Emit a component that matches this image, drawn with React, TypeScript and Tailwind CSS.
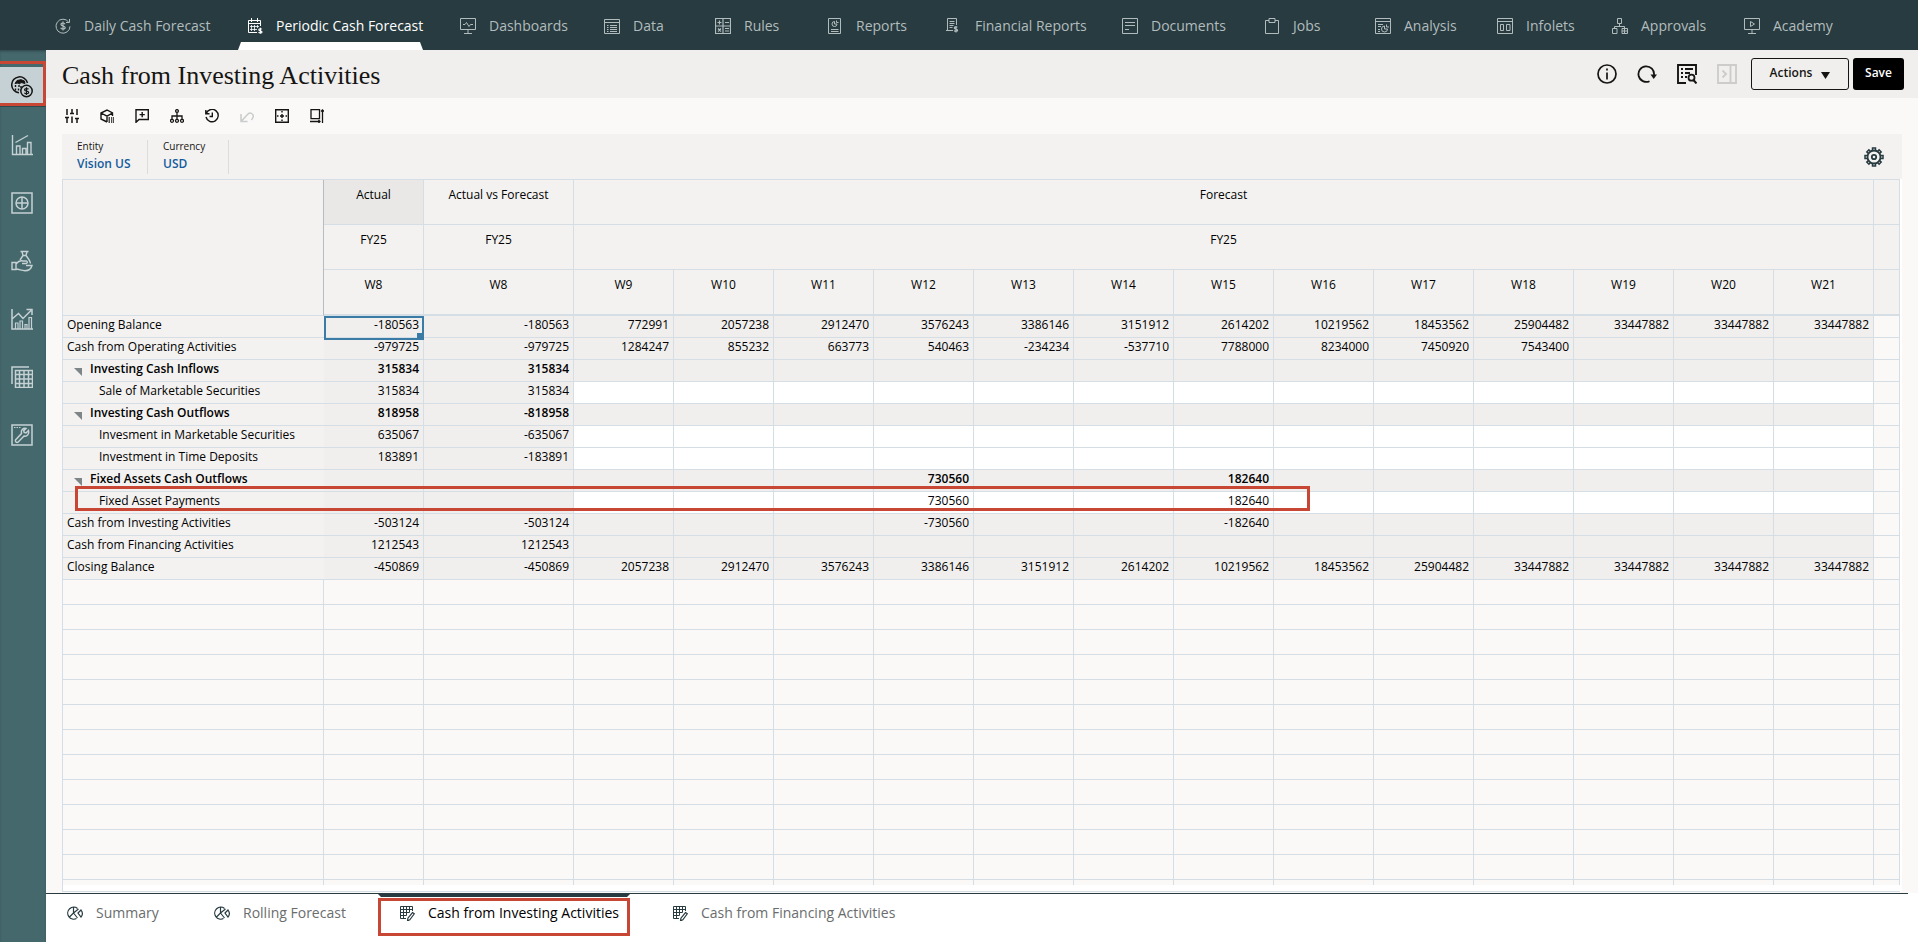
import type { ReactNode } from "react";

interface IconProps {
  children: ReactNode;
  box?: number;
  className?: string;
}

function Icon({ children, box = 16, className = "size-4" }: IconProps) {
  return (
    <svg
      viewBox={`0 0 ${box} ${box}`}
      className={`shrink-0 ${className}`}
      fill="none"
      stroke="currentColor"
      strokeWidth="1"
      aria-hidden="true"
    >
      {children}
    </svg>
  );
}

const dollar = "M10 6.2c-.3-.8-1-1.2-2-1.2-1.2 0-2 .5-2 1.4 0 2 4.2 1.2 4.2 3.2 0 .9-.9 1.4-2.2 1.4-1.2 0-2-.4-2.3-1.3M8 3.5v9";

const navItems: { label: string; icon: ReactNode; active?: boolean }[] = [
  {
    label: "Daily Cash Forecast",
    icon: (
      <Icon>
        <path d="M13.6 4A7 7 0 1 0 15 8.3M14.5 1v3.5H11" />
        <path d={dollar} strokeWidth="1.2" />
      </Icon>
    ),
  },
  {
    label: "Periodic Cash Forecast",
    active: true,
    icon: (
      <Icon>
        <path d="M10 14.5H1.5v-12h12V8M4.5 0v4M10.500 0v4M1.500 5.500h12" />
        <path d="M3 8.500h9M3 11.500h7M4.500 7v6M7.500 7v6M10.500 7v3" strokeWidth=".8" />
        <path d="M14.800 11.300c-.4-.8-3-.8-3 .5 0 1.300 3.200.7 3.200 2.100 0 1.300-2.700 1.300-3.400.2M13.400 9.800v6" strokeWidth="1.200" />
      </Icon>
    ),
  },
  {
    label: "Dashboards",
    icon: (
      <Icon>
        <path d="M.5.500h15v11H.5zM8 11.500v4M4 15.500h8M3 6.500h2l1.500-2 2.500 4 1.500-2H13" />
      </Icon>
    ),
  },
  {
    label: "Data",
    icon: (
      <Icon>
        <path d="M.5 1.500h15v14H.5zM.5 4.500h15M3 7.500h1.500M6 7.500h7M3 9.500h1.500M6 9.500h7M3 11.500h1.500M6 11.500h7M3 13.500h1.500M6 13.500h7" />
      </Icon>
    ),
  },
  {
    label: "Rules",
    icon: (
      <Icon>
        <path d="M.5.500h15v15H.5zM8 .5v15M.5 8h15" strokeWidth="1.200" />
        <path d="M2.500 4.500h4M4.500 2.500v4M10 4.500h4M3 10.500l3 3M6 10.500l-3 3M10 10.500h4M10 13h4" strokeWidth="1.200" />
      </Icon>
    ),
  },
  {
    label: "Reports",
    icon: (
      <Icon>
        <path d="M1.500.500h12v15h-12zM4 11.500h7.500M4 13.500h7.500M7.500 3.500A2.500 2.500 0 1 0 10 6H7.500zM9.500 2.500v2h2" />
      </Icon>
    ),
  },
  {
    label: "Financial Reports",
    icon: (
      <Icon>
        <path d="M10.500 7V.500h-9v12H7M3.500 3.500h5M3.500 5.500h5M3.500 7.500h4M3.500 9.500h3M0 12.500h6" />
        <path d="M11.300 9.300c-.5-.7-3-.8-3 .6 0 1.500 3.300.8 3.300 2.400 0 1.400-2.900 1.300-3.400.2M10 8v6.500" strokeWidth="1.200" />
      </Icon>
    ),
  },
  {
    label: "Documents",
    icon: (
      <Icon>
        <path d="M.5.500h15v15H.5zM3 4.500h10M3 7.500h10M3 11.500h4" />
      </Icon>
    ),
  },
  {
    label: "Jobs",
    icon: (
      <Icon>
        <path d="M5 2.500H1.500v13h13v-13H11M5 .5h6v4H5z" />
      </Icon>
    ),
  },
  {
    label: "Analysis",
    icon: (
      <Icon>
        <path d="M.5.500h15v15H.5zM.5 3.500h15M3 6.500h5M3 8.500h3M3 11.500h2M3 13.500h2M9.500 8A3 3 0 1 0 12.500 11h-3zM11.500 6.500v2.500h2.500" />
      </Icon>
    ),
  },
  {
    label: "Infolets",
    icon: (
      <Icon>
        <path d="M.5.500h15v15H.5zM.5 3.500h15M3.500 6.500h3v6h-3zM9.500 6.500h3.500v6H9.500z" />
      </Icon>
    ),
  },
  {
    label: "Approvals",
    icon: (
      <Icon>
        <path d="M5.500.500h4v5h-4zM7.500 5.500v3M2.500 11V8.500h10V11M.5 10.500h4.500v5H.5zM10 10.500h5.500v5H10zM12.500 11v4.500M10 13h5.500" />
      </Icon>
    ),
  },
  {
    label: "Academy",
    icon: (
      <Icon>
        <path d="M.5.500h15v11H.5zM8 11.500v4M4 15.500h8M6.500 3.500v5l4-2.500z" />
      </Icon>
    ),
  },
];

const sideItems: { label: string; icon: ReactNode; active?: boolean }[] = [
  {
    label: "Cash forecasting",
    active: true,
    icon: (
      <Icon box={22} className="size-[22px]">
        <path d="M8 16.800A8 8 0 1 1 16.500 7" strokeWidth="1.500" />
        <path d="M4 7.500l2-3 4-.8 3.500 1.300.5 2.500-4-1-1.500 1.500-1.500-1z" fill="currentColor" />
        <path d="M4.500 9v2M8 9v2M4.500 12.500v2M7.500 12.500v2M10 10v2" strokeWidth="1.400" />
        <circle cx="15.500" cy="15" r="5.700" strokeWidth="1.500" />
        <path d="M17.500 13.300c-.5-1-4-1.200-4 .5 0 1.800 4.200.9 4.200 2.700 0 1.700-3.700 1.600-4.300.3M15.500 11.200v7.800" strokeWidth="1.200" />
      </Icon>
    ),
  },
  {
    label: "Overview",
    icon: (
      <Icon box={22} className="size-[22px]">
        <path d="M1.500 1v19.500H22M5.500 20v-8H9v8M11.500 20v-5.500H15V20M16.500 20V8.500H20V20M4.500 8.500L17 1.500" strokeWidth="1.400" />
      </Icon>
    ),
  },
  {
    label: "Currencies",
    icon: (
      <Icon box={22} className="size-[22px]">
        <path d="M1 1h20v20H1zM11 5v12M5 11h12" strokeWidth="1.500" />
        <circle cx="11" cy="11" r="6" strokeWidth="1.500" />
      </Icon>
    ),
  },
  {
    label: "Funding",
    icon: (
      <Icon box={22} className="size-[22px]">
        <path d="M9.500 1.500h8M11 1.500l1 4-3 4.500M16 1.500l-1 4c2 2.500 4 5 4.500 8M12 5.500h3" strokeWidth="1.400" />
        <path d="M1 12.500h4v7H1zM5 14c2-2.500 5-3.500 7-3h3.500c1.500.8 1 2.200-.5 2.500h-4M15 15.500h6c-.8 3.500-3.500 5.200-7 5.200-3.500 0-5-1.200-9-1.700" strokeWidth="1.400" />
      </Icon>
    ),
  },
  {
    label: "Trends",
    icon: (
      <Icon box={22} className="size-[22px]">
        <path d="M1 1v20h21M1 11l6.500-5.500 4.500 5 8-8M15.500 1.500H21V7" strokeWidth="1.500" />
        <path d="M4.500 21v-6H7v6M9 21v-8h2.500v8M14 21v-4.500h2V21M18 21V9.500h2.500V21" strokeWidth="1.200" />
      </Icon>
    ),
  },
  {
    label: "Data grid",
    icon: (
      <Icon box={22} className="size-[22px]">
        <path d="M1 18V1h17" strokeWidth="1.500" />
        <path d="M4.500 4.500h17v17h-17zM4.500 8.500h17M4.500 13h17M4.500 17.500h17M8.500 4.500v17M13 4.500v17M17.500 4.500v17" strokeWidth="1.500" />
      </Icon>
    ),
  },
  {
    label: "Configure",
    icon: (
      <Icon box={22} className="size-[22px]">
        <path d="M1 1h20v20H1z" strokeWidth="1.500" />
        <path d="M3 3.500h1.500M5.500 3.500H7M8 3.500h1.500" />
        <path d="M17.500 6.500l-2.500 2.500-1.800-.6-.5-1.700L15 4.500c-3-.7-5.500 2-4.500 5l-6 6.500c-.6 1.500 1 3 2.500 2.200l6-6.200c3 .8 5.500-2 4.500-5.500z" strokeWidth="1.500" />
      </Icon>
    ),
  },
];

const tools: { label: string; icon: ReactNode; disabled?: boolean }[] = [
  {
    label: "Adjust",
    icon: (
      <Icon box={14} className="size-[14px]">
        <path d="M2 0v6M2 8.500V14M7 0v3M7 7.500V14M12 0v6M12 9.500V14M0 8.500h4M5 4.500h4M10 9.500h4M7 3v1.500" strokeWidth="1.500" />
      </Icon>
    ),
  },
  {
    label: "Cube view",
    icon: (
      <Icon box={14} className="size-[14px]">
        <path d="M7 13L1 10V4l6-3 5.500 3v3M1 4l6 3.200L12.500 4M7 7v6" strokeWidth="1.400" />
        <path d="M8.500 9h1.500M11 9h1.300M13 9h1M8.500 11h1.500M11 11h1.300M13 11h1M8.500 13h1.500M11 13h1.300M13 13h1" strokeWidth="1.300" />
      </Icon>
    ),
  },
  {
    label: "Comments",
    icon: (
      <Icon box={14} className="size-[14px]">
        <path d="M1 13.300V.8h12.300v9.700H4zM7.200 3v5.200M4.600 5.600h5.200" strokeWidth="1.400" />
      </Icon>
    ),
  },
  {
    label: "Supporting detail",
    icon: (
      <Icon box={14} className="size-[14px]">
        <circle cx="7" cy="2" r="1.400" strokeWidth="1.300" />
        <path d="M7 3.500V10M2 10V7h10v3" strokeWidth="1.300" />
        <circle cx="2" cy="11.800" r="1.500" strokeWidth="1.300" />
        <circle cx="7" cy="11.800" r="1.500" strokeWidth="1.300" />
        <circle cx="12" cy="11.800" r="1.500" strokeWidth="1.300" />
      </Icon>
    ),
  },
  {
    label: "Change history",
    icon: (
      <Icon box={14} className="size-[14px]">
        <path d="M1.300 4.200A6.200 6.200 0 1 1 1 8M.8 1v3.700h3.700M7.300 3.500v4H4.500" strokeWidth="1.400" />
      </Icon>
    ),
  },
  {
    label: "Undo",
    disabled: true,
    icon: (
      <Icon box={14} className="size-[14px]">
        <path d="M1 5v7.500h6.500M1.500 12L8 5c2-2 5.300-.5 5.300 2.200 0 1.800-1 2.800-2 3.800" strokeWidth="1.500" />
      </Icon>
    ),
  },
  {
    label: "Grid lines",
    icon: (
      <Icon box={14} className="size-[14px]">
        <path d="M.7.700h12.600v12.600H.7z" strokeWidth="1.400" />
        <path d="M7 2v1.500M7 5v4M7 10.500V12M2 7h1.500M5 7h4M10.500 7H12" strokeWidth="1.400" />
      </Icon>
    ),
  },
  {
    label: "Resize",
    icon: (
      <Icon box={14} className="size-[14px]">
        <path d="M1 .700h8.500v9H1zM0 12.500h10M8.500 11l1.500 1.500L8.500 14M12.500 14V1M11 2.500L12.500 1 14 2.500" strokeWidth="1.300" />
      </Icon>
    ),
  },
];

const weeks = ["W9", "W10", "W11", "W12", "W13", "W14", "W15", "W16", "W17", "W18", "W19", "W20", "W21"];
const noValues = weeks.map(() => "");

interface GridRow {
  label: string;
  kind: "total" | "group" | "input";
  actual: string;
  variance: string;
  forecast: string[];
  flagged?: boolean;
}

const rows: GridRow[] = [
  {
    label: "Opening Balance",
    kind: "total",
    actual: "-180563",
    variance: "-180563",
    forecast: ["772991", "2057238", "2912470", "3576243", "3386146", "3151912", "2614202", "10219562", "18453562", "25904482", "33447882", "33447882", "33447882"],
  },
  {
    label: "Cash from Operating Activities",
    kind: "total",
    actual: "-979725",
    variance: "-979725",
    forecast: ["1284247", "855232", "663773", "540463", "-234234", "-537710", "7788000", "8234000", "7450920", "7543400", "", "", ""],
  },
  { label: "Investing Cash Inflows", kind: "group", actual: "315834", variance: "315834", forecast: noValues },
  { label: "Sale of Marketable Securities", kind: "input", actual: "315834", variance: "315834", forecast: noValues },
  { label: "Investing Cash Outflows", kind: "group", actual: "818958", variance: "-818958", forecast: noValues },
  { label: "Invesment in Marketable Securities", kind: "input", actual: "635067", variance: "-635067", forecast: noValues },
  { label: "Investment in Time Deposits", kind: "input", actual: "183891", variance: "-183891", forecast: noValues },
  {
    label: "Fixed Assets Cash Outflows",
    kind: "group",
    actual: "",
    variance: "",
    forecast: ["", "", "", "730560", "", "", "182640", "", "", "", "", "", ""],
  },
  {
    label: "Fixed Asset Payments",
    kind: "input",
    actual: "",
    variance: "",
    forecast: ["", "", "", "730560", "", "", "182640", "", "", "", "", "", ""],
    flagged: true,
  },
  {
    label: "Cash from Investing Activities",
    kind: "total",
    actual: "-503124",
    variance: "-503124",
    forecast: ["", "", "", "-730560", "", "", "-182640", "", "", "", "", "", ""],
  },
  { label: "Cash from Financing Activities", kind: "total", actual: "1212543", variance: "1212543", forecast: noValues },
  {
    label: "Closing Balance",
    kind: "total",
    actual: "-450869",
    variance: "-450869",
    forecast: ["2057238", "2912470", "3576243", "3386146", "3151912", "2614202", "10219562", "18453562", "25904482", "33447882", "33447882", "33447882", "33447882"],
  },
];

const emptyRows = Array.from({ length: 13 }, (_, i) => i);

const pieIcon = (
  <Icon>
    <path d="M9.500 13.500A6 6 0 1 1 10.500 3.500M6.500 2.500v5.500L2.500 12M6.500 8l4 5M6.500 8l5-4" strokeWidth="1.200" />
    <path d="M11 8l3-3c1.800 2.500 1.800 5 0 7z" strokeWidth="1.200" />
  </Icon>
);

const formIcon = (
  <Icon>
    <path d="M7 13.500H1.500v-12h12V6M1.500 4.500h12M1.500 7.500h9M1.500 10.500h6M4.500 1.500v12M7.500 1.500v9M10.500 1.500v6" />
    <path d="M13.500 7.500l1.800 1.300-4.500 6-2.300 1 .4-2.600z" strokeWidth="1.200" fill="#fff" />
  </Icon>
);

const formTabs = [
  { label: "Summary", icon: pieIcon },
  { label: "Rolling Forecast", icon: pieIcon },
  { label: "Cash from Investing Activities", icon: formIcon, active: true },
  { label: "Cash from Financing Activities", icon: formIcon },
];

const headCell =
  "h-[45px] border-r border-b border-[#d5dee5] bg-[#f3f2f0] px-1 pt-[7px] text-center align-top font-normal leading-4";

function TopNav() {
  return (
    <nav className="h-[50px] shrink-0 bg-[#273b40] pl-[35px]">
      <ul className="grid h-full grid-cols-[192px_213px_144px_111px_112px_119px_176px_142px_111px_122px_115px_132px_auto]">
        {navItems.map((item) => (
          <li key={item.label} className="relative">
            <a
              href="#"
              className={`flex h-full items-center gap-[13px] pt-px pl-5 text-sm whitespace-nowrap ${item.active ? "text-white" : "text-[#b3bcbd]"}`}
            >
              {item.icon}
              {item.label}
            </a>
            {item.active && (
              <span className="absolute right-[17px] bottom-0 left-[11px] h-2 bg-white [clip-path:polygon(3px_0,calc(100%-3px)_0,100%_100%,0_100%)]" />
            )}
          </li>
        ))}
      </ul>
    </nav>
  );
}

function SideBar() {
  return (
    <aside className="w-[46px] shrink-0 bg-[#45686d] pt-2 shadow-[inset_0_2px_3px_-1px_rgb(0_0_0/0.35)]">
      {sideItems.map((item) => (
        <button
          key={item.label}
          type="button"
          title={item.label}
          className={`relative flex h-[58px] w-full items-center ${item.active ? "text-[#161513]" : "text-[#c5d1d3]"}`}
        >
          <span className={`flex h-10 w-full items-center pl-[11px] ${item.active ? "border-b border-[#2f4a4f] bg-[#c5d1d4]" : ""}`}>
            {item.icon}
          </span>
          {item.active && (
            <span className="absolute top-[3px] right-0 bottom-[10px] left-0 border-y-3 border-r-3 border-[#c74634]" />
          )}
        </button>
      ))}
    </aside>
  );
}

function TitleBar() {
  return (
    <header className="flex h-12 shrink-0 items-center justify-between bg-[#f0efed] pr-[14px] pl-4">
      <h1 className="pt-[3px] font-['Liberation_Serif',serif] text-[26px] leading-8">Cash from Investing Activities</h1>
      <div className="flex items-center">
        <div className="mr-[14px] flex items-center gap-5">
          <button type="button" title="Information">
            <Icon box={20} className="size-5">
              <circle cx="10" cy="10" r="9" strokeWidth="1.700" />
              <path d="M10 8.500v7M10 4.500v2" strokeWidth="1.700" />
            </Icon>
          </button>
          <button type="button" title="Refresh">
            <Icon box={20} className="size-5">
              <path d="M12.500 17.200A7.800 7.800 0 1 1 17 11" strokeWidth="1.800" />
              <path d="M13.500 10.500H20L16.700 15z" fill="currentColor" stroke="none" />
            </Icon>
          </button>
          <button type="button" title="Find in form">
            <Icon box={20} className="size-5">
              <path d="M9 19H1V1h18v10M8 5h8M8 9h5M8 13h2M4 5h2M4 9h2M4 13h2" strokeWidth="1.900" />
              <circle cx="14.500" cy="13.700" r="3" strokeWidth="1.800" />
              <path d="M16.500 16l3 3.500" strokeWidth="2" />
            </Icon>
          </button>
          <button type="button" title="Expand panel" disabled className="text-[#cccccb]">
            <Icon box={20} className="size-5">
              <path d="M1 1h18v18H1zM13.500 1v18M5.500 6.500L9 10l-3.500 3.500" strokeWidth="1.900" />
            </Icon>
          </button>
        </div>
        <button
          type="button"
          className="mr-1 flex h-8 w-[98px] items-center justify-center gap-[9px] rounded-[3px] border border-[#161513] pb-0.5 text-xs font-semibold"
        >
          Actions
          <svg viewBox="0 0 9 7" className="mt-1 h-[7px] w-[9px]" aria-hidden="true">
            <path d="M0 0h9L4.500 7z" fill="currentColor" />
          </svg>
        </button>
        <button type="button" className="h-8 w-[51px] rounded-[3px] bg-black pb-0.5 text-xs font-semibold text-white">
          Save
        </button>
      </div>
    </header>
  );
}

function PointOfView() {
  return (
    <div className="mr-4 ml-4 flex h-[45px] shrink-0 items-center justify-between bg-[#f3f2f0]">
      <dl className="flex h-[34px]">
        <div className="w-[86px] border-r border-[#dcdcda] pl-[15px]">
          <dt className="text-[10px] leading-3">Entity</dt>
          <dd className="mt-1 text-xs leading-4 font-semibold whitespace-nowrap text-[#145c9e]">
            <a href="#">Vision US</a>
          </dd>
        </div>
        <div className="w-[81px] border-r border-[#dcdcda] pl-[15px]">
          <dt className="text-[10px] leading-3">Currency</dt>
          <dd className="mt-1 text-xs leading-4 font-semibold text-[#145c9e]">
            <a href="#">USD</a>
          </dd>
        </div>
      </dl>
      <button type="button" title="Settings" className="mr-[18px] text-[#273b40]">
        <Icon box={20} className="size-5">
          <circle cx="10" cy="10" r="6.500" strokeWidth="1.800" />
          <circle cx="10" cy="10" r="2.200" strokeWidth="1.800" />
          <path
            d="M8.500 4V1h3v3M8.500 16v3h3v-3M4 8.500H1v3h3M16 8.500h3v3h-3M4.700 6.800L2.800 4.900l2.100-2.100 1.900 1.900M13.200 4.700l1.900-1.900 2.100 2.100-1.900 1.900M15.300 13.200l1.900 1.900-2.100 2.100-1.900-1.900M6.800 15.300l-1.900 1.900-2.100-2.100 1.900-1.900"
            strokeWidth="1.500"
          />
        </Icon>
      </button>
    </div>
  );
}

function RowLabel({ row }: { row: GridRow }) {
  if (row.kind === "group") {
    return (
      <span className="flex items-start pl-[7px] font-semibold">
        <svg viewBox="0 0 8 8" className="mt-2 mr-2 size-2" aria-hidden="true">
          <path d="M0 0h8v8z" fill="#7d8587" />
        </svg>
        {row.label}
      </span>
    );
  }
  return <span className={row.kind === "input" ? "pl-8" : ""}>{row.label}</span>;
}

function ForecastGrid() {
  return (
    <div className="mr-4 ml-4 mb-px flex min-h-0 flex-1 flex-col bg-white pr-0.5">
      <div className="min-h-0 flex-1 border-b border-l border-[#d5dee5] pb-[6px]">
        <div className="h-full overflow-hidden border-t border-[#d5dee5]">
          <table className="w-full table-fixed border-separate border-spacing-0 text-xs text-black">
            <colgroup>
              <col className="w-[261px]" />
              <col className="w-[100px]" />
              <col className="w-[150px]" />
              {weeks.map((week) => (
                <col key={week} className="w-[100px]" />
              ))}
              <col />
            </colgroup>
            <thead>
              <tr>
                <td rowSpan={3} className="border-r border-b border-r-[#b5bdc1] border-b-[#d5dee5] bg-[#f3f2f0]" />
                <th className={`${headCell} bg-[#e9e8e6]!`}>Actual</th>
                <th className={headCell}>Actual vs Forecast</th>
                <th colSpan={13} className={headCell}>Forecast</th>
                <td className={headCell} />
              </tr>
              <tr>
                <th className={headCell}>FY25</th>
                <th className={headCell}>FY25</th>
                <th colSpan={13} className={headCell}>FY25</th>
                <td className={headCell} />
              </tr>
              <tr>
                {["W8", "W8", ...weeks].map((week, i) => (
                  <th key={i} className={`${headCell} h-[46px]! border-b-2`}>{week}</th>
                ))}
                <td className={`${headCell} h-[46px]! border-b-2`} />
              </tr>
            </thead>
            <tbody>
              {rows.map((row, r) => {
                const bold = row.kind === "group" ? "font-semibold" : "";
                const cell = `h-[22px] border-r border-b border-[#d5dee5] p-0 pr-1 text-right align-top leading-[17px] ${bold}`;
                return (
                  <tr key={row.label}>
                    <th
                      scope="row"
                      className="relative h-[22px] border-b border-[#d5dee5] bg-[#f3f2f0] p-0 pl-1 text-left align-top leading-[17px] font-normal whitespace-nowrap"
                    >
                      <RowLabel row={row} />
                      {row.flagged && (
                        <span className="pointer-events-none absolute -top-[6px] left-3 z-10 h-[25px] w-[1235px] border-3 border-[#c74634]" />
                      )}
                    </th>
                    <td className={`${cell} relative bg-[#f0efed]`}>
                      {row.actual}
                      {r === 0 && (
                        <span className="absolute top-0 -right-px -bottom-[3px] left-0 z-10 border-2 border-[#3a7ca5]">
                          <span className="absolute right-0 bottom-0 size-[5px] bg-[#3a7ca5]" />
                        </span>
                      )}
                    </td>
                    <td className={`${cell} bg-[#f0efed]`}>{row.variance}</td>
                    {row.forecast.map((value, i) => (
                      <td key={i} className={`${cell} ${row.kind === "input" ? "bg-white" : "bg-[#f0efed]"}`}>
                        {value}
                      </td>
                    ))}
                    <td className="border-r border-b border-[#d5dee5] bg-[#faf9f7]" />
                  </tr>
                );
              })}
              {emptyRows.map((n) => (
                <tr key={n}>
                  {Array.from({ length: 17 }, (_, i) => (
                    <td key={i} className="h-[25px] border-r border-b border-[#d5dee5] bg-[#faf9f7] p-0" />
                  ))}
                </tr>
              ))}
            </tbody>
          </table>
        </div>
      </div>
    </div>
  );
}

function FormTabs() {
  return (
    <footer className="h-[49px] shrink-0 bg-white">
      <div className="mr-[10px] h-full border-t border-[#273b40]">
        <ul className="grid h-full grid-cols-[147px_185px_273px_auto] pl-[21px]">
          {formTabs.map((tab) => (
            <li key={tab.label} className="relative">
              <a
                href="#"
                className={`flex h-[38px] items-center gap-[13px] text-sm whitespace-nowrap ${tab.active ? "text-black" : "text-[#6a6d6d]"}`}
              >
                <span className="text-[#273b40]">{tab.icon}</span>
                {tab.label}
              </a>
              {tab.active && (
                <>
                  <span className="absolute top-0 right-[42px] -left-[21px] h-[3px] bg-[#273b40] [clip-path:polygon(0_0,100%_0,calc(100%-3px)_100%,3px_100%)]" />
                  <span className="absolute top-1 right-[42px] bottom-[6px] -left-[21px] border-3 border-[#c74634]" />
                </>
              )}
            </li>
          ))}
        </ul>
      </div>
    </footer>
  );
}

export default function App() {
  return (
    <div className="flex h-screen flex-col bg-[#fbf9f8] font-['Open_Sans',sans-serif] text-[#161513]">
      <TopNav />
      <div className="flex min-h-0 flex-1">
        <SideBar />
        <main className="flex min-w-0 flex-1 flex-col">
          <TitleBar />
          <div className="flex h-9 shrink-0 items-center gap-[21px] pl-[19px]">
            {tools.map((tool) => (
              <button
                key={tool.label}
                type="button"
                title={tool.label}
                disabled={tool.disabled}
                className={tool.disabled ? "text-[#c9cccb]" : "text-[#161513]"}
              >
                {tool.icon}
              </button>
            ))}
          </div>
          <PointOfView />
          <ForecastGrid />
          <FormTabs />
        </main>
      </div>
    </div>
  );
}
